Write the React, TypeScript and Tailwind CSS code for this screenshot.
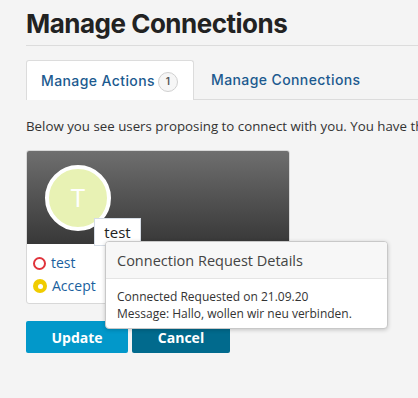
import React from "react";

const App = () => {
  return (
    <div className="w-[418px] h-[398px] overflow-hidden bg-[#f4f4f4] pl-[26px] pt-[6px] font-['Open_Sans',sans-serif]">
      <h1 className="text-[26px] leading-[36px] font-bold text-[#222] tracking-[-0.5px] font-['Inter',sans-serif]">
        Manage Connections
      </h1>
      <div className="mt-[3px] border-t border-[#dcdcdc]" />

      <div className="mt-[14px] flex items-end border-b border-[#dcdcdc] font-['Inter',sans-serif]">
        <div className="relative -mb-px flex h-[40px] w-[168px] items-center rounded-t-[3px] border border-b-0 border-[#dcdcdc] bg-white pl-[14px]">
          <span className="text-[14px] font-medium tracking-[0.4px] text-[#1c5a8f]">Manage Actions</span>
          <span className="ml-[3px] mt-[2px] flex h-[20px] w-[20px] items-center justify-center rounded-full border border-[#d0d0d0] bg-[#f6f6f6] text-[10px] font-semibold text-[#555]">
            1
          </span>
        </div>
        <div className="flex h-[39px] items-center pl-[17px] text-[14px] font-medium tracking-[0.4px] text-[#1c5a8f]">
          Manage Connections
        </div>
      </div>

      <p className="mt-[16px] whitespace-nowrap text-[13.3px] leading-[20px] text-[#333]">
        Below you see users proposing to connect with you. You have the option to accept or decline.
      </p>

      <div className="relative mt-[14px] w-[264px]">
        <div className="overflow-hidden rounded-[3px] border border-[#d8d8d8] bg-white">
          <div className="flex h-[93px] items-center bg-gradient-to-b from-[#6f6f6f] to-[#383838] pl-[18px]">
            <div className="flex h-[66px] w-[66px] items-center justify-center rounded-full border-[4px] border-white bg-[#e8f2b4] text-[26px] text-white">
              T
            </div>
          </div>
          <div className="flex flex-col gap-[3px] px-[6px] pt-[9px] pb-[7px] text-[14px] leading-[20px]">
            <div className="flex items-center gap-[5px]">
              <span className="h-[13px] w-[13px] rounded-full border-[2px] border-[#e0343c]" />
              <span className="text-[#1a5f9e]">test</span>
            </div>
            <div className="flex items-center gap-[5px]">
              <span className="flex h-[14px] w-[14px] items-center justify-center rounded-full bg-[#f0cc00]">
                <span className="h-[5px] w-[5px] rounded-full bg-white" />
              </span>
              <span className="text-[#1a5f9e]">Accept</span>
            </div>
          </div>
        </div>

        <div className="absolute left-[68px] top-[68px] z-10 flex h-[28px] w-[47px] items-center justify-center border border-[#d6dde6] bg-white text-[15px] text-[#222]">
          test
        </div>

        <div className="absolute left-[79px] top-[91px] z-20 w-[283px] overflow-hidden rounded-[4px] border border-[#c8c8c8] bg-white shadow-[0_1px_4px_rgba(0,0,0,0.2)]">
          <div className="border-b border-[#e4e4e4] bg-[#f7f7f7] px-[11px] pt-[9px] pb-[7px] text-[14.5px] leading-[20px] text-[#444]">
            Connection Request Details
          </div>
          <div className="px-[11px] pt-[9px] pb-[6px] text-[12px] leading-[17px] text-[#333]">
            <div>Connected Requested on 21.09.20</div>
            <div>Message: Hallo, wollen wir neu verbinden.</div>
          </div>
        </div>
      </div>

      <div className="mt-[17px] flex gap-[4px]">
        <button className="h-[32px] w-[102px] rounded-[2px] bg-[#0298ca] text-[14px] font-bold text-white">
          Update
        </button>
        <button className="h-[32px] w-[98px] rounded-[2px] bg-[#016a8d] text-[14px] font-bold text-white">
          Cancel
        </button>
      </div>
    </div>
  );
};

export default App;
